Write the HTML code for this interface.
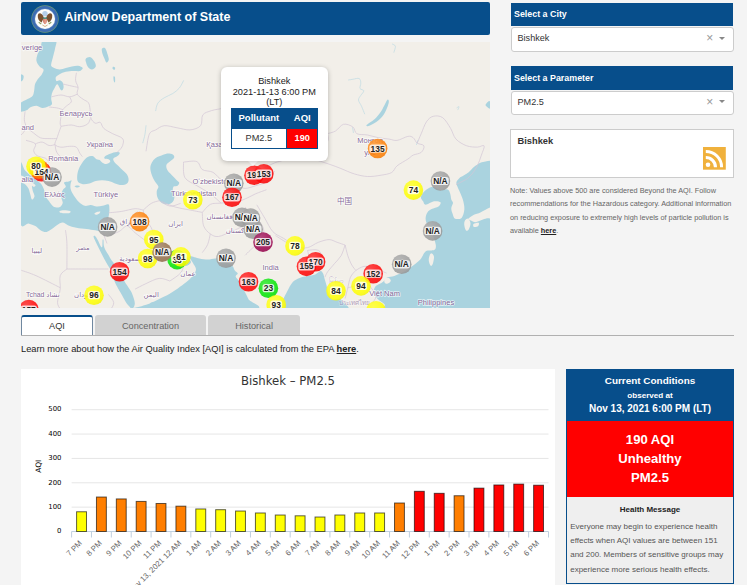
<!DOCTYPE html>
<html lang="en"><head><meta charset="utf-8"><title>AirNow Department of State</title>
<style>
html,body{margin:0;padding:0}
body{width:747px;height:585px;overflow:hidden;background:#f4f4f4;font-family:"Liberation Sans",Arial,sans-serif;color:#333;position:relative}
.abs{position:absolute}
#hdr{left:21px;top:2px;width:469px;height:33px;background:#074e8b;border-radius:2px}
#hdr .t{position:absolute;left:43.4px;top:-1.3px;line-height:33px;font-size:12.5px;font-weight:bold;color:#fff;white-space:nowrap}
#map{left:21px;top:42px;width:469px;height:266px;overflow:hidden;background:#f2efe9}
#map svg{position:absolute;left:0;top:0}
.mt{font:bold 8.4px "Liberation Sans",Arial,sans-serif;text-anchor:middle;fill:#222;stroke:#fff;stroke-opacity:.5;stroke-width:1px;paint-order:stroke;stroke-linejoin:round}
.ml{font:7.5px "Liberation Sans","DejaVu Sans","Noto Sans CJK SC",sans-serif;fill:#7c5c92;fill-opacity:.95;stroke:#fff;stroke-opacity:.7;stroke-width:1.4px;paint-order:stroke}
.ar{font-size:6.9px}
.th{font-size:6.4px;fill-opacity:.6;stroke-opacity:.35}
#pop{left:221px;top:67px;width:106.6px;height:94px;background:#fff;border-radius:6px;box-shadow:0 1px 5px rgba(0,0,0,.25);text-align:center;font-size:9.2px;line-height:10.3px;color:#222}
#pop .tx{position:absolute;left:0;right:0;top:9.3px}
#pop table{position:absolute;left:9.6px;top:41.3px;width:87.8px;height:40px;border-collapse:collapse}
#pop th{background:#074e8b;color:#fff;font-weight:bold;font-size:9.5px;height:19.6px;padding:0;border:0}
#pop td{padding:0;font-size:9.2px;height:19.4px;border:1px solid #074e8b}
#tip{left:246.8px;top:160.3px;width:0;height:0;border-left:6.8px solid transparent;border-right:6.8px solid transparent;border-top:6px solid #fff}
.bh{background:#074e8b;color:#fff;font-weight:bold;font-size:8.9px;line-height:23px;padding-left:3px;box-sizing:border-box;height:23px;width:222px;left:511px}
.sel{left:510.5px;width:223.1px;height:24.6px;box-sizing:border-box;border:1px solid #ccc;border-radius:3px;background:#fff;font-size:9.1px;line-height:22px;padding-left:6px;color:#333}
.sel .x{position:absolute;right:19.3px;top:0.2px;color:#999;font-size:12px}
.sel .v{position:absolute;right:7.2px;top:8.8px;width:0;height:0;border-left:3px solid transparent;border-right:3px solid transparent;border-top:3.5px solid #888}
#info{left:510px;top:129px;width:224px;height:49px;box-sizing:border-box;border:1px solid #ccc;background:#fff}
#info b{position:absolute;left:6.5px;top:6px;font-size:9.3px;color:#333}
#note{left:510px;top:183.7px;width:230px;font-size:7.3px;line-height:13.5px;color:#666;white-space:nowrap}
#note b,#learn b{color:#222;text-decoration:underline}
.tab{top:315px;height:20px;box-sizing:border-box;background:#d2d2d2;border-radius:3px 3px 0 0;font-size:9.2px;line-height:22px;text-align:center;color:#666}
#tabline{left:21px;top:334.7px;width:713px;height:1px;background:#b0b0b0}
#learn{left:21px;top:343.5px;font-size:9.3px;line-height:11px;color:#222;white-space:nowrap}
#chart{left:21px;top:369px;width:534px;height:216px;background:#fff}
#chartsvg{left:0;top:0}
.yl{font:6.9px "DejaVu Sans","Liberation Sans",sans-serif;text-anchor:end;fill:#000}
.xl{font:7.8px "Liberation Sans",Arial,sans-serif;text-anchor:end;fill:#666}
.yt{font:7.5px "DejaVu Sans","Liberation Sans",sans-serif;text-anchor:middle;fill:#000}
.ct{font:11.7px "DejaVu Sans","Liberation Sans",sans-serif;text-anchor:middle;fill:#333}
#cc{left:566px;top:369px;width:168px;height:214.5px;box-sizing:border-box;border:1px solid #074e8b;border-top:0;background:#efefef;text-align:center}
#cc .top{position:absolute;left:-1px;top:0;width:168px;height:52px;background:#074e8b;color:#fff;font-weight:bold}
#cc .top div{position:absolute;left:0;right:0;white-space:nowrap}
#cc .red{position:absolute;left:0;top:51.6px;width:166px;height:76.8px;background:#ff0000;color:#fff;font-weight:bold;font-size:13.1px;line-height:16px}
#cc .red div{position:absolute;left:0;right:0}
#cc .hm{position:absolute;left:0;right:0;top:135.5px;font-size:8px;font-weight:bold;color:#222;line-height:10px}
#cc .msg{position:absolute;left:3.2px;top:150.5px;text-align:left;font-size:8px;line-height:14.4px;color:#555;white-space:nowrap}
</style></head><body>
<div id="hdr" class="abs">
<svg class="abs" style="left:9.6px;top:2.5px" width="28" height="28" viewBox="-14 -14 28 28">
<circle r="13.7" fill="#6f9a7a"/><circle r="13.1" fill="#3c6cb2"/><circle r="10.6" fill="#5d86c4"/><circle r="10" fill="#fdfdfa"/>
<circle cx="0" cy="-5.2" r="2.7" fill="#b4cfea"/>
<path d="M-1.2,-1.5 C-3,-6.5 -6.8,-6.8 -7.2,-3.6 C-7.5,-1 -6.3,2.2 -3.4,3.6 L-2,0.5 Z" fill="#7a5230"/>
<path d="M1.2,-1.5 C3,-6.5 6.8,-6.8 7.2,-3.6 C7.5,-1 6.3,2.2 3.4,3.6 L2,0.5 Z" fill="#7a5230"/>
<path d="M-2,-1.6 h4 v1.5 h-4z" fill="#3a7a6a"/>
<path d="M-2,-.1 h4 v2.2 c0,1.8 -1.2,2.6 -2,3.1 c-.8,-.5 -2,-1.3 -2,-3.1z" fill="#d0604a"/>
<path d="M-1,-.1 v4.3 M0.2,-.1 v5 M1.2,-.1 v4.3" stroke="#f6ebe0" stroke-width=".5"/>
<path d="M-6.3,3.2 l2.6,1.8 M6.3,3.2 l-2.6,1.8" stroke="#8aa060" stroke-width="1.1"/>
<path d="M-2.6,6 l2.6,1.5 l2.6,-1.5" stroke="#d2b48c" stroke-width="1" fill="none"/>
</svg>
<div class="t">AirNow Department of State</div></div>

<div id="map" class="abs">
<svg width="469" height="266" viewBox="21 42 469 266">
<defs><radialGradient id="gl" cx=".35" cy=".3" r=".8"><stop offset="0" stop-color="#fff" stop-opacity=".2"/><stop offset=".65" stop-color="#fff" stop-opacity=".02"/><stop offset="1" stop-color="#000" stop-opacity=".05"/></radialGradient></defs>
<g id="water">
<path d="M43.5,39.5 C40.9,41.0 41.4,46.2 40.4,48.8 C39.4,51.4 37.9,52.8 37.3,54.9 C36.6,57.0 36.1,59.2 36.5,61.1 C36.9,63.0 38.4,65.1 39.6,66.5 C40.8,67.9 43.1,68.2 43.5,69.5 C43.9,70.8 42.8,72.7 41.9,74.2 C41.0,75.8 39.2,77.1 38.1,78.8 C37.0,80.5 35.6,82.3 35.0,84.2 C34.4,86.1 34.6,88.4 34.2,90.3 C33.8,92.2 33.7,94.3 32.7,95.7 C31.7,97.1 29.6,97.9 28.1,98.8 C26.6,99.7 24.9,100.2 23.5,101.1 C22.1,102.0 20.2,102.5 19.6,104.2 C19.0,105.9 18.5,110.5 19.6,111.5 C20.8,112.5 24.7,111.0 26.5,110.3 C28.3,109.6 28.7,108.0 30.4,107.2 C32.1,106.4 34.5,105.6 36.5,105.7 C38.5,105.8 40.8,107.9 42.7,108.0 C44.6,108.1 46.6,107.1 48.1,106.5 C49.6,105.9 51.4,105.5 51.9,104.2 C52.4,102.9 51.2,100.6 51.2,98.8 C51.2,97.0 51.4,95.1 51.9,93.4 C52.4,91.7 53.3,90.3 54.2,88.8 C55.1,87.3 56.1,84.0 57.3,84.2 C58.5,84.5 60.2,89.7 61.2,90.3 C62.2,90.9 63.2,89.3 63.5,88.0 C63.8,86.7 63.4,83.9 62.7,82.6 C62.1,81.3 60.6,80.5 59.6,80.3 C58.6,80.0 57.1,81.6 56.5,81.1 C55.9,80.6 55.3,78.3 55.8,77.2 C56.3,76.1 57.9,75.1 59.6,74.2 C61.3,73.3 63.5,72.3 65.8,71.8 C68.1,71.3 71.2,71.2 73.5,71.1 C75.8,71.0 78.1,71.6 79.6,71.1 C81.1,70.6 83.0,68.9 82.7,68.0 C82.5,67.1 79.9,66.0 78.1,65.7 C76.3,65.5 74.0,66.1 71.9,66.5 C69.9,66.9 67.8,67.5 65.8,68.0 C63.8,68.5 61.5,69.5 59.6,69.5 C57.7,69.5 55.6,68.6 54.2,68.0 C52.8,67.4 51.6,66.9 51.2,65.7 C50.8,64.5 51.5,62.9 51.9,61.1 C52.3,59.3 53.0,57.0 53.5,54.9 C54.0,52.8 54.6,51.4 55.0,48.8 C55.4,46.2 57.7,41.0 55.8,39.5 C53.9,38.0 46.1,38.0 43.5,39.5Z" fill="#aad3df"/>
<path d="M19.6,74.6 C20.2,73.6 23.0,74.8 23.5,75.7 C24.0,76.7 23.3,79.3 22.7,80.3 C22.1,81.2 20.1,82.4 19.6,81.4 C19.1,80.5 19.0,75.5 19.6,74.6Z" fill="#aad3df"/>
<path d="M85.8,58.8 C86.5,57.9 89.0,56.8 90.4,57.2 C91.8,57.6 93.3,59.6 94.2,61.1 C95.1,62.6 96.2,65.1 95.8,66.5 C95.4,67.9 93.2,69.4 91.9,69.5 C90.6,69.6 89.1,68.4 88.1,67.2 C87.1,66.0 86.5,64.0 86.1,62.6 C85.7,61.2 85.1,59.7 85.8,58.8Z" fill="#aad3df"/>
<path d="M101.9,48.8 C102.3,47.9 104.1,47.2 105.0,48.0 C105.9,48.8 106.7,51.5 107.3,53.4 C107.9,55.3 108.9,58.0 108.8,59.5 C108.7,61.0 107.3,62.9 106.5,62.6 C105.7,62.4 104.9,59.5 104.2,58.0 C103.5,56.5 102.8,54.9 102.4,53.4 C102.0,51.9 101.5,49.7 101.9,48.8Z" fill="#aad3df"/>
<path d="M112.8,66.9 C113.2,66.6 114.7,67.0 115.0,67.5 C115.3,68.0 115.1,69.4 114.7,69.7 C114.3,70.0 113.1,69.6 112.8,69.1 C112.5,68.6 112.4,67.2 112.8,66.9Z" fill="#aad3df"/>
<path d="M113.5,76.5 C113.7,75.8 114.8,76.2 115.0,77.2 C115.2,78.2 115.2,81.7 115.0,82.3 C114.8,82.9 114.0,82.1 113.8,81.1 C113.5,80.1 113.3,77.2 113.5,76.5Z" fill="#aad3df"/>
<path d="M77.2,176.1 C77.3,173.9 77.8,171.3 78.8,168.9 C79.8,166.5 81.4,163.7 82.9,161.7 C84.4,159.7 86.1,157.8 87.7,156.9 C89.3,156.0 91.0,155.7 92.5,156.1 C94.0,156.5 95.3,158.6 96.5,159.3 C97.7,160.0 98.8,159.6 99.7,160.1 C100.6,160.6 101.0,161.8 102.1,162.5 C103.2,163.2 104.8,164.2 106.1,164.1 C107.4,164.0 109.8,162.5 110.2,161.7 C110.6,160.9 109.5,159.8 108.6,159.3 C107.6,158.8 105.0,159.0 104.5,158.5 C104.0,158.0 104.3,156.9 105.3,156.1 C106.2,155.3 108.3,154.4 110.2,153.7 C112.1,153.0 115.0,152.1 116.6,152.0 C118.2,151.9 119.7,152.2 119.8,152.9 C119.9,153.6 118.5,155.2 117.4,156.1 C116.3,157.0 113.9,157.6 113.4,158.5 C112.9,159.4 113.4,160.5 114.2,161.7 C115.0,162.9 116.7,164.2 118.2,165.7 C119.7,167.2 121.5,169.0 123.0,170.5 C124.5,172.0 126.1,173.0 127.0,174.5 C127.9,176.0 128.6,177.9 128.6,179.4 C128.6,180.9 128.2,182.5 127.0,183.4 C125.8,184.3 123.4,185.0 121.4,185.0 C119.4,185.0 117.1,184.1 115.0,183.4 C112.9,182.7 110.8,181.5 108.6,181.0 C106.4,180.5 104.2,180.2 102.1,180.2 C99.9,180.2 97.8,180.5 95.7,181.0 C93.6,181.5 91.4,182.9 89.3,183.4 C87.2,183.9 84.8,184.5 82.9,184.2 C81.0,183.9 79.0,183.2 78.0,181.8 C77.0,180.5 77.1,178.2 77.2,176.1Z" fill="#aad3df"/>
<path d="M74.5,186.3 C74.5,186.0 76.3,185.5 77.2,185.5 C78.1,185.5 80.0,186.0 80.0,186.3 C80.0,186.7 78.1,187.6 77.2,187.6 C76.3,187.6 74.5,186.7 74.5,186.3Z" fill="#aad3df"/>
<path d="M160.0,156.1 C161.9,155.3 164.3,154.0 166.4,153.7 C168.5,153.4 171.5,153.8 172.8,154.5 C174.1,155.2 174.6,156.5 174.1,157.7 C173.6,158.9 170.9,160.5 169.6,161.7 C168.3,162.9 166.8,163.6 166.4,164.9 C166.0,166.2 166.4,168.1 167.2,169.7 C168.0,171.3 169.7,172.9 171.2,174.5 C172.7,176.1 174.7,178.1 176.0,179.4 C177.3,180.8 178.9,181.5 179.2,182.6 C179.5,183.7 178.5,185.1 177.6,185.8 C176.7,186.5 174.4,185.7 173.6,186.6 C172.8,187.5 172.7,189.7 172.8,191.4 C172.9,193.1 174.4,195.3 174.4,197.0 C174.4,198.7 173.9,200.6 172.8,201.8 C171.7,203.0 169.9,204.2 168.0,204.3 C166.1,204.5 163.3,203.8 161.6,202.7 C159.9,201.6 158.4,199.7 157.6,197.8 C156.8,195.9 156.6,193.3 156.7,191.4 C156.8,189.5 158.7,188.2 158.4,186.6 C158.1,185.0 156.2,183.7 155.1,181.8 C154.0,179.9 152.7,177.6 151.9,175.3 C151.1,173.0 150.3,170.2 150.3,168.1 C150.3,166.0 151.1,164.1 151.9,162.5 C152.7,160.9 153.8,159.6 155.1,158.5 C156.4,157.4 158.1,156.9 160.0,156.1Z" fill="#aad3df"/>
<path d="M20.0,165.4 C20.9,156.8 23.0,168.5 25.1,170.5 C27.2,172.5 30.2,175.3 32.8,177.4 C35.4,179.5 38.6,181.3 40.5,183.3 C42.4,185.3 43.0,187.2 43.9,189.3 C44.8,191.5 44.7,194.2 45.6,196.2 C46.5,198.2 47.8,199.6 49.1,201.3 C50.4,203.0 51.6,205.4 53.3,206.4 C55.0,207.4 57.7,207.9 59.3,207.3 C60.9,206.7 62.4,204.8 62.7,203.0 C63.0,201.2 61.0,198.3 61.0,196.2 C61.0,194.1 61.9,191.8 62.7,190.2 C63.5,188.6 65.6,188.0 65.8,186.8 C66.0,185.7 64.3,184.1 64.1,183.3 C63.9,182.6 63.8,182.6 64.5,182.3 C65.2,182.0 67.4,181.9 68.6,181.6 C69.8,181.2 71.2,179.8 71.5,180.2 C71.8,180.6 70.8,182.6 70.6,184 C70.4,185.4 70.3,187.3 70.6,188.8 C70.9,190.3 71.6,191.7 72.3,193 C73.0,194.3 73.4,194.9 74.5,196.4 C75.6,197.9 77.2,200.5 78.9,202.1 C80.6,203.7 82.8,205.3 84.8,205.8 C86.8,206.3 88.7,204.9 90.7,205 C92.7,205.1 94.6,206.4 96.6,206.5 C98.6,206.6 100.5,206.2 102.5,205.8 C104.5,205.4 107.2,203.7 108.4,204.3 C109.6,204.9 109.3,207.7 109.4,209.5 C109.5,211.3 109.2,212.9 108.9,215.0 C108.6,217.1 107.9,219.5 107.5,221.8 C107.1,224.1 106.8,226.9 106.3,228.6 C105.8,230.2 106.4,231.4 104.6,231.7 C102.8,232.0 98.2,230.8 95.2,230.3 C92.2,229.9 89.8,229.4 86.7,229.0 C83.6,228.6 79.5,228.4 76.4,227.8 C73.3,227.2 70.2,226.1 67.9,225.2 C65.6,224.3 64.6,222.6 62.7,222.6 C60.9,222.6 58.9,223.9 56.8,225.2 C54.7,226.5 51.8,229.2 49.9,230.3 C48.0,231.5 47.2,232.1 45.6,232.1 C44.0,232.1 42.2,231.3 40.5,230.3 C38.8,229.3 37.4,227.2 35.4,226.1 C33.4,225.0 31.1,224.2 28.5,223.5 C25.9,222.8 21.4,231.5 20.0,221.8 C18.6,212.1 19.1,174.0 20.0,165.4Z" fill="#aad3df"/>
<path d="M93.5,236.6 C93.5,237.5 94.6,239.5 95.4,241.2 C96.2,242.9 97.2,244.9 98.2,246.9 C99.2,248.9 100.2,250.9 101.2,252.9 C102.2,254.9 103.2,256.9 104.3,258.9 C105.4,260.9 106.5,262.8 107.7,264.9 C108.9,267.0 110.3,268.7 111.5,271.5 C112.7,274.3 113.6,278.8 114.6,281.5 C115.6,284.2 116.7,285.8 117.7,287.7 C118.7,289.6 119.8,291.3 120.8,293.1 C121.8,294.9 122.8,296.7 123.8,298.5 C124.8,300.3 125.8,302.3 126.9,303.8 C128.0,305.3 129.4,306.7 130.5,307.4 C131.6,308.1 132.5,308.6 133.2,308.0 C133.9,307.4 134.7,305.4 134.8,303.8 C134.9,302.2 134.4,300.4 133.8,298.5 C133.2,296.6 132.5,294.4 131.5,292.3 C130.5,290.2 128.8,288.0 127.7,286.2 C126.5,284.4 125.8,283.7 124.6,281.5 C123.4,279.3 121.9,275.9 120.3,273.1 C118.7,270.3 116.6,267.0 115.1,264.9 C113.6,262.8 112.6,261.9 111.5,260.3 C110.4,258.7 109.5,256.8 108.5,255.1 C107.5,253.4 106.2,251.6 105.4,250.0 C104.6,248.4 104.1,247.1 103.8,245.4 C103.5,243.7 103.7,240.9 103.5,240.0 C103.3,239.1 102.8,238.8 102.6,240.0 C102.4,241.2 102.6,246.0 102.2,246.9 C101.8,247.8 101.0,246.6 100.3,245.4 C99.5,244.2 98.6,241.6 97.7,240.0 C96.8,238.4 95.8,236.6 95.1,236.0 C94.4,235.4 93.5,235.7 93.5,236.6Z" fill="#aad3df"/>
<path d="M130.5,307.4 C131.2,306.2 131.4,308.2 133.2,308.0 C135.0,307.8 138.8,306.9 141.5,306.2 C144.2,305.5 146.1,304.8 149.2,303.8 C152.3,302.8 156.7,301.4 160.0,300.0 C163.3,298.6 166.6,296.7 169.2,295.4 C171.8,294.1 173.3,293.1 175.4,292.3 C177.5,291.5 180.5,286.6 181.5,290.5 C182.5,294.4 190.2,311.2 181.5,315.4 C172.8,319.5 137.7,316.7 129.2,315.4 C120.7,314.1 129.8,308.6 130.5,307.4Z" fill="#aad3df"/>
<path d="M189.6,256.4 C190.7,255.7 196.3,258.0 199.3,258.5 C202.3,259.0 205.0,259.6 207.8,259.6 C210.7,259.6 213.6,258.1 216.4,258.5 C219.2,258.9 222.2,260.6 224.9,261.8 C227.6,263.1 230.8,264.6 232.4,266.0 C234.0,267.4 233.7,269.1 234.6,270.3 C235.5,271.6 237.6,272.4 237.8,273.5 C238.0,274.6 235.3,275.3 235.7,276.7 C236.0,278.1 238.5,279.8 239.9,282.1 C241.3,284.4 242.8,287.9 244.2,290.7 C245.6,293.5 247.1,296.0 248.5,299.2 C249.9,302.4 269.2,308.1 252.8,309.9 C236.4,311.7 167.1,311.0 150.0,309.9 C132.9,308.8 149.3,304.9 150.0,303.5 C150.7,302.1 152.5,302.3 154.3,301.4 C156.1,300.5 158.2,299.4 160.7,298.2 C163.2,296.9 166.5,295.5 169.3,293.9 C172.2,292.3 175.0,290.5 177.8,288.5 C180.7,286.5 183.9,284.2 186.4,282.1 C188.9,280.0 191.2,277.8 192.8,275.7 C194.4,273.6 196.0,271.4 196.0,269.3 C196.0,267.2 193.9,265.0 192.8,262.8 C191.7,260.6 188.5,257.1 189.6,256.4Z" fill="#aad3df"/>
<path d="M157,241 C157.8,240.2 160.8,241.5 163,243 C165.2,244.5 167.5,248.0 170,250 C172.5,252.0 175.3,253.8 178,255 C180.7,256.2 183.8,255.8 186,257 C188.2,258.2 191.0,260.5 191,262 C191.0,263.5 187.8,265.7 186,266 C184.2,266.3 182.3,264.7 180,264 C177.7,263.3 174.5,263.3 172,262 C169.5,260.7 167.3,258.3 165,256 C162.7,253.7 159.3,250.5 158,248 C156.7,245.5 156.2,241.8 157,241Z" fill="#aad3df"/>
<path d="M279.6,310.1 C269.4,308.4 281.8,302.8 283.1,299.6 C284.4,296.4 285.8,293.8 287.4,290.9 C289.0,288.0 290.6,284.4 292.6,282.2 C294.6,280.0 297.1,278.9 299.6,277.9 C302.1,276.9 304.8,276.7 307.4,276.1 C310.0,275.5 313.0,275.3 315.2,274.4 C317.4,273.5 319.2,271.0 320.5,270.9 C321.8,270.8 322.4,272.1 323.1,273.5 C323.8,274.9 324.2,277.6 324.8,279.6 C325.4,281.6 326.0,283.5 326.6,285.7 C327.2,287.9 327.6,290.7 328.3,292.7 C329.0,294.7 330.0,296.8 330.9,297.9 C331.8,299.0 332.1,299.5 333.5,299.6 C334.9,299.7 338.2,298.4 339.6,298.7 C341.1,299.0 341.4,299.5 342.2,301.4 C343.0,303.3 354.9,308.7 344.5,310.1 C334.1,311.6 289.8,311.9 279.6,310.1Z" fill="#aad3df"/>
<path d="M420.9,197.5 C420.9,196.1 422.0,194.1 423.1,192.7 C424.2,191.3 425.8,190.0 427.4,189.0 C429.0,188.0 430.9,186.9 432.5,186.8 C434.1,186.7 435.4,187.9 436.8,188.5 C438.2,189.1 439.6,190.1 441.0,190.2 C442.4,190.3 444.0,189.3 445.3,189.3 C446.6,189.3 447.9,189.3 448.7,190.2 C449.5,191.1 450.0,192.9 450.4,194.5 C450.8,196.1 450.9,198.2 451.3,199.6 C451.7,201.0 453.0,201.6 453.0,203.0 C453.0,204.4 451.4,206.2 451.3,208.1 C451.2,209.9 452.1,212.3 452.7,214.1 C453.3,215.9 453.6,218.1 455.1,218.7 C456.6,219.3 460.1,219.4 461.6,217.9 C463.1,216.4 464.0,212.6 464.3,209.8 C464.6,207.0 463.9,203.9 463.3,201.3 C462.7,198.7 461.6,196.4 460.7,194.1 C459.8,191.8 458.5,189.5 457.8,187.6 C457.1,185.7 456.1,184.1 456.4,182.5 C456.6,180.9 458.1,179.3 459.3,178.2 C460.5,177.0 462.0,176.6 463.6,175.6 C465.2,174.6 467.0,173.6 468.7,172.2 C470.4,170.8 471.9,168.7 473.9,167.1 C475.8,165.5 478.5,163.7 480.4,162.8 C482.3,161.9 483.9,161.9 485.5,161.6 C487.1,161.3 488.4,161.0 490.1,160.8 C491.8,160.6 494.8,160.1 495.8,160.3 C496.8,160.5 496.0,136.1 496,162 C496.0,187.9 513.9,290.3 496,316 C478.1,341.7 407.4,317.9 388.8,316 C370.2,314.1 386.5,307.4 384.7,304.6 C382.9,301.8 379.7,301.2 377.9,299.2 C376.1,297.1 374.2,294.4 373.8,292.3 C373.4,290.2 374.3,288.2 375.2,286.8 C376.1,285.4 377.9,285.0 379.3,284.1 C380.7,283.2 382.0,282.5 383.4,281.4 C384.8,280.3 385.7,278.2 387.5,277.3 C389.3,276.4 391.6,276.8 394.3,275.9 C397.0,275.0 400.9,273.4 403.9,271.8 C406.9,270.2 409.4,268.4 412.1,266.3 C414.8,264.2 418.0,262.0 420.3,259.5 C422.6,257.0 423.5,252.9 425.8,251.3 C428.1,249.7 432.5,250.9 434.2,250.0 C435.9,249.1 435.9,247.7 435.9,245.8 C435.9,244.0 434.9,241.2 434.2,238.9 C433.5,236.6 432.7,234.4 431.6,232.1 C430.5,229.8 428.4,227.5 427.4,225.2 C426.4,222.9 425.6,220.5 425.6,218.4 C425.6,216.3 426.4,214.0 427.4,212.4 C428.4,210.8 429.8,210.0 431.6,209.0 C433.5,208.0 437.0,207.5 438.5,206.4 C440.0,205.3 441.2,203.2 440.5,202.3 C439.8,201.5 436.7,200.9 434.2,201.3 C431.7,201.7 427.5,204.7 425.6,204.7 C423.8,204.7 423.9,202.5 423.1,201.3 C422.3,200.1 420.9,198.9 420.9,197.5Z" fill="#aad3df"/>
<path d="M387.7,99.6 C388.3,99.5 389.3,100.5 388.7,103.0 C388.1,105.5 385.9,111.4 383.8,114.6 C381.7,117.8 378.9,120.1 376.3,122.0 C373.7,123.9 370.0,125.6 368.4,126.1 C366.8,126.6 365.7,126.0 366.8,124.8 C367.9,123.6 372.4,121.2 374.8,118.9 C377.2,116.6 379.4,113.8 381.2,111.2 C382.9,108.6 384.2,105.4 385.3,103.5 C386.4,101.6 387.1,99.7 387.7,99.6Z" fill="#aad3df"/>
<path d="M485.6,104.8 C485.9,103.8 488.7,100.5 489.7,101.2 C490.7,101.9 491.8,107.9 491.5,108.9 C491.2,109.9 488.7,108.1 487.7,107.4 C486.7,106.7 485.3,105.8 485.6,104.8Z" fill="#aad3df"/>
<path d="M20.0,175.6 C20.9,174.9 23.4,176.4 25.1,177.4 C26.8,178.4 28.6,180.3 30.3,181.6 C32.0,182.9 34.8,184.1 35.4,185.0 C36.0,185.9 34.3,186.7 33.7,186.8 C33.1,187.0 32.1,185.2 32.0,185.9 C31.8,186.6 32.4,189.3 32.8,191.0 C33.2,192.7 34.6,194.8 34.5,196.2 C34.4,197.6 32.7,199.9 32.0,199.6 C31.3,199.3 30.9,196.2 30.3,194.4 C29.7,192.6 29.4,190.2 28.5,188.5 C27.6,186.8 26.5,185.3 25.1,184.2 C23.7,183.0 20.9,183.0 20.0,181.6 C19.1,180.2 19.1,176.3 20.0,175.6Z" fill="#f2efe9"/>
<path d="M59.8,211 C60.5,210.6 62.3,210.3 64,210.3 C65.7,210.3 69.2,210.6 70.1,211 C71.0,211.4 70.7,212.6 69.5,213 C68.3,213.4 64.6,213.3 63,213.2 C61.4,213.1 60.5,213.0 60,212.6 C59.5,212.2 59.1,211.4 59.8,211Z" fill="#f2efe9"/>
<path d="M94.4,213.6 C94.6,213.1 96.0,212.3 97,212 C98.0,211.7 100.0,211.3 100.3,211.6 C100.6,211.9 99.7,213.3 99,213.8 C98.3,214.3 96.8,214.8 96,214.8 C95.2,214.8 94.2,214.1 94.4,213.6Z" fill="#f2efe9"/>
<path d="M468.4,218.7 C468.8,217.8 471.5,216.1 473.5,215.0 C475.5,213.9 478.4,213.3 480.4,212.4 C482.4,211.5 483.8,210.7 485.5,209.8 C487.2,209.0 488.9,207.9 490.6,207.3 C492.3,206.7 494.9,204.4 495.8,206.4 C496.7,208.4 496.8,217.3 495.8,219.3 C494.8,221.3 491.5,218.5 489.8,218.4 C488.1,218.3 487.1,218.3 485.5,218.7 C483.9,219.0 482.1,219.9 480.4,220.5 C478.7,221.1 476.8,222.2 475.2,222.2 C473.6,222.2 472.1,221.1 471.0,220.5 C469.9,219.9 468.0,219.6 468.4,218.7Z" fill="#f2efe9"/>
<path d="M465.0,220.5 C465.7,219.4 467.5,218.2 468.4,218.7 C469.3,219.2 470.4,221.7 470.5,223.5 C470.6,225.3 469.4,228.3 468.7,229.5 C467.9,230.7 466.7,231.1 466.0,230.4 C465.3,229.7 464.5,226.8 464.3,225.2 C464.1,223.5 464.3,221.6 465.0,220.5Z" fill="#f2efe9"/>
<path d="M473.5,223.9 C474.3,223.2 477.9,222.4 478.7,222.8 C479.4,223.2 478.8,225.6 478.0,226.3 C477.2,227.0 474.6,227.3 473.9,226.9 C473.1,226.5 472.7,224.6 473.5,223.9Z" fill="#f2efe9"/>
<path d="M431.8,253.4 C432.5,253.6 433.8,255.0 434.0,256.7 C434.2,258.4 433.4,262.1 432.9,263.6 C432.3,265.1 431.4,266.3 430.7,265.8 C430.0,265.3 429.0,262.5 428.8,260.8 C428.6,259.1 429.1,256.6 429.6,255.4 C430.1,254.2 431.1,253.2 431.8,253.4Z" fill="#f2efe9"/>
<path d="M384.7,278.6 C385.4,277.8 387.8,277.7 388.8,278.1 C389.8,278.5 390.9,279.9 390.8,280.8 C390.7,281.7 389.0,283.3 388.0,283.6 C387.0,283.9 385.2,283.5 384.7,282.7 C384.1,281.9 384.0,279.4 384.7,278.6Z" fill="#f2efe9"/>
</g>
<g id="rivers" fill="none" stroke="#bcd9e3" stroke-width=".9" stroke-opacity=".75" stroke-linecap="round">
<path d="M348.5,80.0 C349.3,79.9 351.3,79.5 353.1,79.2 C354.9,79.0 357.9,77.8 359.2,78.5 C360.5,79.2 360.7,81.4 360.8,83.1 C360.9,84.8 359.5,87.2 360.0,88.5 C360.5,89.8 363.7,89.6 363.8,90.8 C363.9,92.0 361.7,93.9 360.8,95.4 C359.9,96.9 358.4,98.2 358.5,100.0 C358.6,101.8 360.5,103.9 361.5,106.2 C362.5,108.5 364.1,112.5 364.6,113.8"/>
<path d="M352.6,127.7 L353.4,132.6"/>
<path d="M183.5,80.7 C182.8,82.0 181.0,86.1 179.2,88.2 C177.4,90.3 175.3,91.9 172.8,93.5 C170.3,95.1 166.7,96.2 164.2,97.8 C161.7,99.4 159.2,101.0 157.8,103.2 C156.4,105.4 156.0,109.5 155.7,110.7"/>
<path d="M146.0,125.7 C145.8,127.1 145.5,131.3 145.0,134.2 C144.5,137.0 143.2,141.4 142.8,142.8"/>
<path d="M392.3,44.1 C392.8,44.5 395.1,44.8 395.4,46.2 C395.7,47.6 394.1,51.3 393.9,52.3"/>
<path d="M456.9,107.7 C457.2,107.5 458.8,106.4 459.0,106.7 C459.2,107.0 458.1,109.2 457.9,109.7"/>
<path d="M417.9,140.5 L416.5,144.6"/>
</g>
<g id="borders" fill="none" stroke="#d3c5d6" stroke-width=".7">
<path d="M76.4,72.8 C76.3,74.1 75.3,78.1 75.6,80.5 C75.9,82.9 77.8,85.1 78.1,87.4 C78.4,89.7 76.4,92.2 77.3,94.2 C78.2,96.2 81.3,97.9 83.2,99.3 C85.1,100.7 87.2,101.0 88.4,102.7 C89.6,104.4 89.7,107.0 90.1,109.6 C90.5,112.2 90.1,115.8 90.9,118.1 C91.8,120.4 93.6,122.5 95.2,123.2 C96.8,123.9 98.9,121.5 100.3,122.4 C101.7,123.3 101.8,126.6 103.8,128.4 C105.8,130.2 109.2,131.8 112.3,133.5 C115.4,135.2 120.9,136.6 122.6,138.6 C124.3,140.6 123.2,143.5 122.6,145.5 C122.0,147.5 120.2,149.3 119.1,150.6 C117.9,151.9 116.3,152.8 115.7,153.2"/>
<path d="M62.7,83.9 C63.9,84.2 67.0,85.0 69.6,85.6 C72.2,86.2 76.7,87.1 78.1,87.4"/>
<path d="M51.6,96.8 C53.2,96.5 58.0,95.0 61.0,95.0 C64.0,95.0 66.9,96.9 69.6,96.8 C72.3,96.7 76.0,94.6 77.3,94.2"/>
<path d="M69.6,96.8 C69.9,97.7 71.9,100.3 71.3,101.9 C70.7,103.5 67.6,104.9 66.2,106.2 C64.8,107.5 63.3,109.0 62.7,109.6"/>
<path d="M49.1,107.0 C50.4,107.2 54.5,107.5 56.8,107.9 C59.1,108.3 61.7,109.3 62.7,109.6"/>
<path d="M62.7,109.6 C62.4,110.7 61.4,114.1 61.0,116.4 C60.6,118.7 60.2,121.5 60.2,123.2 C60.2,124.9 60.9,126.1 61.0,126.7"/>
<path d="M61.0,126.3 C62.7,126.1 68.2,124.9 71.3,125.0 C74.4,125.1 77.1,126.9 79.8,126.7 C82.5,126.5 85.7,125.4 87.5,124.1 C89.3,122.8 89.9,119.5 90.4,118.6"/>
<path d="M61.0,126.7 C60.6,127.8 59.2,131.5 58.5,133.5 C57.8,135.5 57.1,137.8 56.8,138.6"/>
<path d="M26.0,127.5 C27.0,128.2 29.6,130.1 32.0,131.8 C34.4,133.5 37.6,136.7 40.5,137.8 C43.4,138.9 46.4,138.5 49.1,138.6 C51.8,138.7 55.5,138.6 56.8,138.6"/>
<path d="M56.8,138.6 C56.5,139.6 54.3,143.2 55.0,144.6 C55.7,146.0 58.6,146.9 61.0,147.2 C63.4,147.5 67.0,146.3 69.6,146.3 C72.2,146.3 74.7,146.0 76.4,147.2 C78.1,148.3 78.8,151.6 79.8,153.2 C80.8,154.8 82.0,156.0 82.4,156.6"/>
<path d="M25.1,111.3 C25.0,112.7 24.2,117.1 24.3,119.8 C24.4,122.5 26.3,125.2 26.0,127.5 C25.7,129.8 23.6,132.2 22.6,133.5 C21.6,134.8 20.4,134.9 20.0,135.2"/>
<path d="M35.4,143.8 C36.5,143.5 39.9,141.8 42.2,142.1 C44.5,142.4 47.0,145.1 49.1,145.5 C51.2,145.9 54.0,144.8 55.0,144.6"/>
<path d="M26.0,140.3 C27.6,140.9 34.1,142.1 35.4,143.8 C36.7,145.5 33.4,148.6 33.7,150.6 C34.0,152.6 35.1,154.4 37.1,155.7 C39.1,157.0 43.6,157.2 45.6,158.3 C47.6,159.5 48.5,161.9 49.1,162.6"/>
<path d="M55.0,144.6 C55.3,145.9 55.5,150.0 56.8,152.3 C58.1,154.6 60.3,156.9 62.7,158.3 C65.1,159.7 68.7,160.9 71.3,160.9 C73.9,160.9 77.0,158.7 78.1,158.3"/>
<path d="M146.0,151.3 C146.6,148.5 147.7,137.8 149.3,134.2 C150.9,130.6 153.2,131.3 155.7,129.9 C158.2,128.5 160.6,126.1 164.2,125.7 C167.8,125.3 172.8,127.1 177.1,127.8 C181.4,128.5 186.0,130.2 189.9,129.9 C193.8,129.6 198.4,128.2 200.6,125.7 C202.8,123.2 201.0,117.4 202.8,114.9 C204.6,112.4 208.1,111.8 211.3,110.7 C214.5,109.6 220.3,108.9 222.1,108.5"/>
<path d="M183.5,162.1 C185.7,162.0 193.8,160.3 196.9,161.6 C200.0,162.8 199.6,167.8 202.3,169.6 C205.0,171.4 209.7,170.5 213.0,172.3 C216.3,174.1 219.3,179.2 222.4,180.3 C225.5,181.4 230.1,179.2 231.7,179.0"/>
<path d="M183.5,162.1 C183.7,164.7 182.7,173.7 184.9,177.6 C187.1,181.5 192.7,183.0 196.9,185.7 C201.1,188.4 206.3,190.8 210.3,193.7 C214.3,196.6 219.2,201.5 221.0,203.1"/>
<path d="M247.8,171.8 C249.6,171.5 254.0,171.6 258.5,170.1 C263.0,168.6 270.6,164.6 274.6,162.9 C278.6,161.2 280.4,161.8 282.6,160.2 C284.8,158.6 284.9,155.1 288.0,153.5 C291.1,151.9 299.2,151.3 301.4,150.9"/>
<path d="M274.6,171.0 C273.2,172.8 269.6,179.2 266.5,181.7 C263.4,184.1 259.4,184.6 255.8,185.7 C252.2,186.8 248.2,188.4 245.1,188.4 C242.0,188.4 238.4,186.1 237.1,185.7"/>
<path d="M202.3,212.4 C203.6,211.1 207.2,206.0 210.3,204.4 C213.4,202.8 216.5,203.6 221.0,203.1 C225.5,202.6 232.6,202.6 237.1,201.7 C241.6,200.8 244.7,199.0 247.8,197.7 C250.9,196.4 252.7,195.0 255.8,193.7 C258.9,192.4 264.7,190.4 266.5,189.7"/>
<path d="M202.3,212.4 C202.5,214.6 202.3,222.2 203.6,225.8 C204.9,229.4 207.8,232.1 210.3,233.9 C212.8,235.7 214.8,236.9 218.4,236.5 C222.0,236.1 227.7,233.0 231.7,231.2 C235.7,229.4 239.7,228.5 242.4,225.8 C245.1,223.1 247.4,218.2 247.8,215.1 C248.2,212.0 245.6,208.4 245.1,207.1"/>
<path d="M162.1,201.7 C164.3,202.6 171.0,205.8 175.5,207.1 C180.0,208.4 184.4,208.9 188.9,209.8 C193.4,210.7 200.1,212.0 202.3,212.4"/>
<path d="M247.8,215.1 C249.6,216.0 255.8,217.8 258.5,220.5 C261.2,223.2 263.9,227.6 263.9,231.2 C263.9,234.8 260.7,238.8 258.5,241.9 C256.3,245.0 252.7,247.7 250.5,249.9 C248.3,252.1 246.0,254.4 245.1,255.3"/>
<path d="M210.3,233.9 C209.9,235.7 208.9,241.5 207.6,244.6 C206.3,247.7 203.2,251.3 202.3,252.6"/>
<path d="M327.5,133.7 C328.8,133.2 332.8,132.6 335.5,131.0 C338.2,129.4 340.6,125.0 343.5,124.3 C346.4,123.6 350.7,125.4 352.9,127.0 C355.1,128.6 354.4,132.4 356.9,133.7 C359.3,135.0 364.0,134.3 367.6,135.0 C371.2,135.7 374.8,137.0 378.4,137.7 C382.0,138.4 386.0,138.6 389.1,139.1 C392.2,139.6 394.0,140.8 397.1,140.4 C400.2,140.0 405.1,136.9 407.8,136.4 C410.5,135.9 411.6,136.6 413.2,137.7 C414.8,138.8 415.4,141.8 417.2,143.1 C419.0,144.4 423.2,144.2 423.9,145.8 C424.6,147.4 423.0,150.9 421.2,152.4 C419.4,153.9 415.4,154.0 413.2,155.1 C411.0,156.2 410.5,157.3 407.8,159.1 C405.1,160.9 399.8,163.6 397.1,165.8 C394.4,168.0 394.4,170.9 391.7,172.5 C389.0,174.1 385.0,174.5 381.0,175.2 C377.0,175.9 372.1,176.7 367.6,176.5 C363.2,176.3 358.8,175.2 354.3,173.9 C349.9,172.6 344.9,170.1 340.9,168.5 C336.9,166.9 333.3,165.6 330.2,164.5 C327.1,163.4 324.3,162.7 322.1,161.8 C319.9,160.9 317.7,161.1 316.8,159.1 C315.9,157.1 315.0,152.7 316.8,149.8 C318.6,146.9 325.7,144.4 327.5,141.7 C329.3,139.0 327.5,135.0 327.5,133.7"/>
<path d="M417.2,143.1 C417.9,141.5 419.6,137.3 421.2,133.7 C422.8,130.1 424.5,124.6 426.5,121.7 C428.5,118.8 430.5,117.0 433.2,116.3 C435.9,115.6 439.7,115.6 442.6,117.6 C445.5,119.6 448.4,124.8 450.6,128.4 C452.8,132.0 453.3,136.2 456.0,139.1 C458.7,142.0 463.1,144.5 466.7,145.8 C470.3,147.1 474.5,147.1 477.4,147.1 C480.3,147.1 483.4,144.5 484.1,145.8 C484.8,147.1 482.5,151.8 481.4,155.1 C480.3,158.4 478.9,162.7 477.4,165.8 C475.8,168.9 473.9,171.7 472.1,173.9 C470.3,176.1 467.6,178.3 466.7,179.2"/>
<path d="M456.0,184.6 L466.7,179.2"/>
<path d="M290.0,128.4 C291.8,129.3 297.1,132.4 300.7,133.7 C304.3,135.0 308.3,134.6 311.4,136.4 C314.5,138.2 318.6,142.2 319.5,144.4 C320.4,146.6 317.2,148.9 316.8,149.8"/>
<path d="M256.8,204.8 C258.1,207.0 262.1,213.7 264.8,218.2 C267.5,222.7 269.7,228.2 272.8,231.6 C275.9,234.9 279.5,235.9 283.5,238.3 C287.5,240.8 292.9,244.8 296.9,246.3 C300.9,247.9 304.0,248.3 307.6,247.6 C311.2,246.9 314.8,243.6 318.4,242.3 C322.0,241.0 326.0,239.6 329.1,239.6 C332.2,239.6 334.4,241.4 337.1,242.3 C339.8,243.2 343.8,244.6 345.1,245.0"/>
<path d="M275.5,235.6 C277.7,236.9 284.0,241.4 288.9,243.6 C293.8,245.8 302.3,248.1 305.0,249.0"/>
<path d="M307.6,250.3 C309.4,250.3 315.9,249.0 318.4,250.3 C320.9,251.7 322.0,255.7 322.4,258.4 C322.8,261.1 322.6,265.5 321.0,266.4 C319.4,267.3 315.0,265.5 313.0,263.7 C311.0,261.9 309.9,257.9 309.0,255.7 C308.1,253.5 307.8,251.2 307.6,250.3"/>
<path d="M345.1,245.0 C344.4,246.8 342.9,252.6 341.1,255.7 C339.3,258.8 336.6,261.0 334.4,263.7 C332.2,266.4 329.3,269.5 327.7,271.7 C326.1,273.9 325.4,276.2 325.0,277.1"/>
<path d="M345.1,245.0 C345.6,246.8 346.7,252.4 347.8,255.7 C348.9,259.0 350.5,262.6 351.8,265.0 C353.1,267.4 355.1,269.5 355.8,270.4"/>
<path d="M355.8,270.4 C354.9,271.5 351.8,274.2 350.5,277.1 C349.2,280.0 348.7,284.2 347.8,287.8 C346.9,291.4 345.6,296.7 345.1,298.5"/>
<path d="M355.8,270.4 C357.1,269.7 361.2,266.8 363.9,266.4 C366.6,265.9 369.2,267.0 371.9,267.7 C374.6,268.4 377.4,269.5 379.9,270.4 C382.3,271.3 385.5,272.7 386.6,273.1"/>
<path d="M363.9,277.1 C364.8,278.4 367.2,282.0 369.2,285.1 C371.2,288.2 375.4,292.7 375.9,295.8 C376.3,298.9 372.6,302.5 371.9,303.9"/>
<path d="M347.8,287.8 C349.1,287.4 353.1,286.9 355.8,285.1 C358.5,283.3 362.5,278.4 363.9,277.1"/>
<path d="M65.5,230.2 C65.7,232.4 66.7,237.0 66.9,243.5 C67.1,250.0 66.9,264.8 66.9,269.0"/>
<path d="M66.9,269.0 C70.2,269.0 80.0,269.0 86.9,269.0 C93.8,269.0 104.8,269.0 108.4,269.0"/>
<path d="M21.3,270.3 C23.8,271.2 29.6,272.8 36.1,275.7 C42.6,278.6 56.2,285.7 60.2,287.7"/>
<path d="M66.9,269.0 C65.8,270.1 61.3,272.3 60.2,275.7 C59.1,279.1 60.7,284.7 60.2,289.1 C59.8,293.6 57.5,299.1 57.5,302.4 C57.5,305.7 59.8,308.0 60.2,309.1"/>
<path d="M103.0,232.8 L107.0,243.5"/>
<path d="M108.4,235.5 C110.2,234.8 116.0,233.1 119.1,231.5 C122.2,229.9 124.4,225.9 127.1,226.1 C129.8,226.3 132.0,230.3 135.1,232.8 C138.2,235.3 144.0,239.6 145.8,240.9"/>
<path d="M108.4,212.8 C110.6,212.6 117.2,212.1 121.7,211.4 C126.2,210.7 131.5,208.9 135.1,208.7 C138.7,208.5 141.8,209.9 143.2,210.1"/>
<path d="M143.2,210.1 C143.6,211.7 144.5,216.6 145.8,219.5 C147.1,222.4 149.8,224.8 151.2,227.5 C152.5,230.2 153.4,234.2 153.9,235.5"/>
<path d="M127.1,226.1 C128.0,224.6 130.6,219.2 132.4,216.8 C134.2,214.4 136.9,212.3 137.8,211.4"/>
<path d="M135.1,289.1 C136.9,288.2 141.8,285.5 145.8,283.7 C149.8,281.9 155.2,278.8 159.2,278.4 C163.2,277.9 168.1,280.6 169.9,281.0"/>
<path d="M169.9,281.0 C171.7,279.7 178.4,275.7 180.6,273.0 C182.8,270.3 183.7,267.2 183.3,265.0 C182.9,262.8 178.9,260.5 178.0,259.6"/>
<path d="M108.4,294.4 C109.3,295.7 113.3,299.9 113.7,302.4 C114.1,304.8 111.5,308.0 111.0,309.1"/>
<path d="M143.2,210.1 C144.5,209.0 148.5,205.0 151.2,203.4 C153.9,201.8 157.9,201.1 159.2,200.7"/>
<path d="M159.2,200.7 C161.0,201.6 166.3,205.6 169.9,206.1 C173.5,206.6 178.8,203.8 180.6,203.4"/>
</g>
<g id="labels">
<text class="ml" x="21.8" y="49.6" text-anchor="start">verige</text>
<text class="ml" x="76" y="115.6" text-anchor="middle">Беларусь</text>
<text class="ml" x="21.5" y="130.4" text-anchor="start">and</text>
<text class="ml" x="99.8" y="147.2" text-anchor="middle">Україна</text>
<text class="ml" x="63.2" y="160.9" text-anchor="middle">România</text>
<text class="ml" x="21.4" y="182.3" text-anchor="start">alia</text>
<text class="ml" x="54.4" y="197.3" text-anchor="middle">Ελλάς</text>
<text class="ml" x="105.8" y="196.5" text-anchor="middle">Türkiye</text>
<text class="ml" x="193.6" y="195.8" text-anchor="middle">Türkmenistan</text>
<text class="ml" x="212" y="183.5" text-anchor="middle">Oʻzbekiston</text>
<text class="ml" x="206.3" y="146.9" text-anchor="start">Қазақстан</text>
<text class="ml ar" x="175.5" y="225.8" text-anchor="middle">ایران</text>
<text class="ml ar" x="220.4" y="219.1" text-anchor="middle">افغانستان</text>
<text class="ml ar" x="237" y="233" text-anchor="middle">پاکستان</text>
<text class="ml" x="270.6" y="269.6" text-anchor="middle">India</text>
<text class="ml" x="344.4" y="203.5" text-anchor="middle">中国</text>
<text class="ml" x="370" y="143" text-anchor="middle">Монгол</text>
<text class="ml" x="370" y="154.6" text-anchor="middle">улс</text>
<text class="ml" x="384.6" y="295.8" text-anchor="middle">Việt Nam</text>
<text class="ml th" x="354.5" y="305.2" text-anchor="middle">ประเทศไทย</text>
<text class="ml" x="436" y="305.4" text-anchor="middle">Philippines</text>
<text class="ml ar" x="36.8" y="252.9" text-anchor="middle">ليبيا</text>
<text class="ml ar" x="82.9" y="250.2" text-anchor="middle">مصر</text>
<text class="ml ar" x="129" y="223.5" text-anchor="middle">العراق</text>
<text class="ml ar" x="132" y="261" text-anchor="middle">السعودية</text>
<text class="ml ar" x="151.2" y="297.1" text-anchor="middle">اليمن</text>
<text class="ml ar" x="188" y="276.2" text-anchor="middle">عمان</text>
<text class="ml ar" x="42.8" y="297.1" text-anchor="middle">Tchad تشاد</text>
<text class="ml ar" x="86" y="297.1" text-anchor="middle">السودان</text>
<text class="ml th" x="336" y="283" text-anchor="middle">မြန်မာ</text>
</g>
<g id="markers">
<g transform="translate(28.8,309.5)"><circle r="9.8" fill="#ff0000" fill-opacity=".86"/><circle r="9.8" fill="url(#gl)"/></g>
<g transform="translate(41.5,171.7)"><circle r="9.8" fill="#ff0000" fill-opacity=".86"/><circle r="9.8" fill="url(#gl)"/></g>
<g transform="translate(39,169.2)"><circle r="9.8" fill="#ff7e00" fill-opacity=".86"/><circle r="9.8" fill="url(#gl)"/></g>
<g transform="translate(36,166.3)"><circle r="9.8" fill="#ffff00" fill-opacity=".86"/><circle r="9.8" fill="url(#gl)"/></g>
<g transform="translate(52,177.1)"><circle r="9.8" fill="#9b9b9b" fill-opacity=".86"/><circle r="9.8" fill="url(#gl)"/></g>
<g transform="translate(139.6,221.6)"><circle r="9.8" fill="#ff7e00" fill-opacity=".86"/><circle r="9.8" fill="url(#gl)"/></g>
<g transform="translate(107.6,226.9)"><circle r="9.8" fill="#9b9b9b" fill-opacity=".86"/><circle r="9.8" fill="url(#gl)"/></g>
<g transform="translate(153.8,239.5)"><circle r="9.8" fill="#ffff00" fill-opacity=".86"/><circle r="9.8" fill="url(#gl)"/></g>
<g transform="translate(147.7,258.5)"><circle r="9.8" fill="#ffff00" fill-opacity=".86"/><circle r="9.8" fill="url(#gl)"/></g>
<g transform="translate(177.1,259.6)"><circle r="9.8" fill="#00e400" fill-opacity=".86"/><circle r="9.8" fill="url(#gl)"/></g>
<g transform="translate(180.9,256.9)"><circle r="9.8" fill="#ffff00" fill-opacity=".86"/><circle r="9.8" fill="url(#gl)"/></g>
<g transform="translate(162.1,252.1)"><circle r="9.8" fill="#a08060" fill-opacity="1"/><circle r="9.8" fill="url(#gl)"/></g>
<g transform="translate(119.6,271.7)"><circle r="9.8" fill="#ff0000" fill-opacity=".86"/><circle r="9.8" fill="url(#gl)"/></g>
<g transform="translate(94,295.2)"><circle r="9.8" fill="#ffff00" fill-opacity=".86"/><circle r="9.8" fill="url(#gl)"/></g>
<g transform="translate(192.8,199.7)"><circle r="9.8" fill="#ffff00" fill-opacity=".86"/><circle r="9.8" fill="url(#gl)"/></g>
<g transform="translate(233.8,183.3)"><circle r="9.8" fill="#9b9b9b" fill-opacity=".86"/><circle r="9.8" fill="url(#gl)"/></g>
<g transform="translate(232,197.3)"><circle r="9.8" fill="#ff0000" fill-opacity=".86"/><circle r="9.8" fill="url(#gl)"/></g>
<g transform="translate(254,175.3)"><circle r="9.8" fill="#ff0000" fill-opacity=".86"/><circle r="9.8" fill="url(#gl)"/></g>
<g transform="translate(263.8,173.7)"><circle r="9.8" fill="#ff0000" fill-opacity=".86"/><circle r="9.8" fill="url(#gl)"/></g>
<g transform="translate(242,217.4)"><circle r="9.8" fill="#9b9b9b" fill-opacity=".86"/><circle r="9.8" fill="url(#gl)"/></g>
<g transform="translate(250.6,218.1)"><circle r="9.8" fill="#9b9b9b" fill-opacity=".86"/><circle r="9.8" fill="url(#gl)"/></g>
<g transform="translate(253.2,229.2)"><circle r="9.8" fill="#9b9b9b" fill-opacity=".86"/><circle r="9.8" fill="url(#gl)"/></g>
<g transform="translate(263,242.1)"><circle r="9.8" fill="#99004c" fill-opacity=".86"/><circle r="9.8" fill="url(#gl)"/></g>
<g transform="translate(295,245.9)"><circle r="9.8" fill="#ffff00" fill-opacity=".86"/><circle r="9.8" fill="url(#gl)"/></g>
<g transform="translate(226,258.2)"><circle r="9.8" fill="#9b9b9b" fill-opacity=".86"/><circle r="9.8" fill="url(#gl)"/></g>
<g transform="translate(248.5,281.7)"><circle r="9.8" fill="#ff0000" fill-opacity=".86"/><circle r="9.8" fill="url(#gl)"/></g>
<g transform="translate(268.4,288.2)"><circle r="9.8" fill="#00e400" fill-opacity=".86"/><circle r="9.8" fill="url(#gl)"/></g>
<g transform="translate(276.2,304.7)"><circle r="9.8" fill="#ffff00" fill-opacity=".86"/><circle r="9.8" fill="url(#gl)"/></g>
<g transform="translate(315.6,261.7)"><circle r="9.8" fill="#ff0000" fill-opacity=".86"/><circle r="9.8" fill="url(#gl)"/></g>
<g transform="translate(306.5,266.4)"><circle r="9.8" fill="#ff0000" fill-opacity=".86"/><circle r="9.8" fill="url(#gl)"/></g>
<g transform="translate(336,290.7)"><circle r="9.8" fill="#ffff00" fill-opacity=".86"/><circle r="9.8" fill="url(#gl)"/></g>
<g transform="translate(373.2,273.7)"><circle r="9.8" fill="#ff0000" fill-opacity=".86"/><circle r="9.8" fill="url(#gl)"/></g>
<g transform="translate(361,285.9)"><circle r="9.8" fill="#ffff00" fill-opacity=".86"/><circle r="9.8" fill="url(#gl)"/></g>
<g transform="translate(376,310.7)"><circle r="9.8" fill="#ffff00" fill-opacity=".86"/><circle r="9.8" fill="url(#gl)"/></g>
<g transform="translate(377.6,148.5)"><circle r="9.8" fill="#ff7e00" fill-opacity=".86"/><circle r="9.8" fill="url(#gl)"/></g>
<g transform="translate(413.4,190.1)"><circle r="9.8" fill="#ffff00" fill-opacity=".86"/><circle r="9.8" fill="url(#gl)"/></g>
<g transform="translate(440.4,181.0)"><circle r="9.8" fill="#9b9b9b" fill-opacity=".86"/><circle r="9.8" fill="url(#gl)"/></g>
<g transform="translate(432.6,230.9)"><circle r="9.8" fill="#9b9b9b" fill-opacity=".86"/><circle r="9.8" fill="url(#gl)"/></g>
<g transform="translate(401.7,264.3)"><circle r="9.8" fill="#9b9b9b" fill-opacity=".86"/><circle r="9.8" fill="url(#gl)"/></g>
<rect x="20.6" y="305.4" width="16.4" height="8.2" rx="2.6" fill="#fff" fill-opacity=".78"/><text class="mt" x="28.8" y="312.5">157</text>
<rect x="33.3" y="167.6" width="16.4" height="8.2" rx="2.6" fill="#fff" fill-opacity=".78"/><text class="mt" x="41.5" y="174.7">154</text>
<rect x="30.1" y="162.2" width="11.8" height="8.2" rx="2.6" fill="#fff" fill-opacity=".78"/><text class="mt" x="36" y="169.3">80</text>
<rect x="43.7" y="173.0" width="16.6" height="8.2" rx="2.6" fill="#fff" fill-opacity=".78"/><text class="mt" x="52" y="180.1">N/A</text>
<rect x="131.4" y="217.5" width="16.4" height="8.2" rx="2.6" fill="#fff" fill-opacity=".78"/><text class="mt" x="139.6" y="224.6">108</text>
<rect x="99.3" y="222.8" width="16.6" height="8.2" rx="2.6" fill="#fff" fill-opacity=".78"/><text class="mt" x="107.6" y="229.9">N/A</text>
<rect x="147.9" y="235.4" width="11.8" height="8.2" rx="2.6" fill="#fff" fill-opacity=".78"/><text class="mt" x="153.8" y="242.5">95</text>
<rect x="141.8" y="254.4" width="11.8" height="8.2" rx="2.6" fill="#fff" fill-opacity=".78"/><text class="mt" x="147.7" y="261.5">98</text>
<rect x="171.2" y="255.5" width="11.8" height="8.2" rx="2.6" fill="#fff" fill-opacity=".78"/><text class="mt" x="177.1" y="262.6">33</text>
<rect x="175.0" y="252.8" width="11.8" height="8.2" rx="2.6" fill="#fff" fill-opacity=".78"/><text class="mt" x="180.9" y="259.9">61</text>
<rect x="153.8" y="248.0" width="16.6" height="8.2" rx="2.6" fill="#fff" fill-opacity=".78"/><text class="mt" x="162.1" y="255.1">N/A</text>
<rect x="111.4" y="267.6" width="16.4" height="8.2" rx="2.6" fill="#fff" fill-opacity=".78"/><text class="mt" x="119.6" y="274.7">154</text>
<rect x="88.1" y="291.1" width="11.8" height="8.2" rx="2.6" fill="#fff" fill-opacity=".78"/><text class="mt" x="94" y="298.2">96</text>
<rect x="186.9" y="195.6" width="11.8" height="8.2" rx="2.6" fill="#fff" fill-opacity=".78"/><text class="mt" x="192.8" y="202.7">73</text>
<rect x="225.5" y="179.2" width="16.6" height="8.2" rx="2.6" fill="#fff" fill-opacity=".78"/><text class="mt" x="233.8" y="186.3">N/A</text>
<rect x="223.8" y="193.2" width="16.4" height="8.2" rx="2.6" fill="#fff" fill-opacity=".78"/><text class="mt" x="232" y="200.3">167</text>
<rect x="245.8" y="171.2" width="16.4" height="8.2" rx="2.6" fill="#fff" fill-opacity=".78"/><text class="mt" x="254" y="178.3">190</text>
<rect x="255.6" y="169.6" width="16.4" height="8.2" rx="2.6" fill="#fff" fill-opacity=".78"/><text class="mt" x="263.8" y="176.7">153</text>
<rect x="233.7" y="213.3" width="16.6" height="8.2" rx="2.6" fill="#fff" fill-opacity=".78"/><text class="mt" x="242" y="220.4">N/A</text>
<rect x="242.3" y="214.0" width="16.6" height="8.2" rx="2.6" fill="#fff" fill-opacity=".78"/><text class="mt" x="250.6" y="221.1">N/A</text>
<rect x="244.9" y="225.1" width="16.6" height="8.2" rx="2.6" fill="#fff" fill-opacity=".78"/><text class="mt" x="253.2" y="232.2">N/A</text>
<rect x="254.8" y="238.0" width="16.4" height="8.2" rx="2.6" fill="#fff" fill-opacity=".78"/><text class="mt" x="263" y="245.1">205</text>
<rect x="289.1" y="241.8" width="11.8" height="8.2" rx="2.6" fill="#fff" fill-opacity=".78"/><text class="mt" x="295" y="248.9">78</text>
<rect x="217.7" y="254.1" width="16.6" height="8.2" rx="2.6" fill="#fff" fill-opacity=".78"/><text class="mt" x="226" y="261.2">N/A</text>
<rect x="240.3" y="277.6" width="16.4" height="8.2" rx="2.6" fill="#fff" fill-opacity=".78"/><text class="mt" x="248.5" y="284.7">163</text>
<rect x="262.5" y="284.1" width="11.8" height="8.2" rx="2.6" fill="#fff" fill-opacity=".78"/><text class="mt" x="268.4" y="291.2">23</text>
<rect x="270.3" y="300.6" width="11.8" height="8.2" rx="2.6" fill="#fff" fill-opacity=".78"/><text class="mt" x="276.2" y="307.7">93</text>
<rect x="307.4" y="257.6" width="16.4" height="8.2" rx="2.6" fill="#fff" fill-opacity=".78"/><text class="mt" x="315.6" y="264.7">170</text>
<rect x="298.3" y="262.3" width="16.4" height="8.2" rx="2.6" fill="#fff" fill-opacity=".78"/><text class="mt" x="306.5" y="269.4">155</text>
<rect x="330.1" y="286.6" width="11.8" height="8.2" rx="2.6" fill="#fff" fill-opacity=".78"/><text class="mt" x="336" y="293.7">84</text>
<rect x="365.0" y="269.6" width="16.4" height="8.2" rx="2.6" fill="#fff" fill-opacity=".78"/><text class="mt" x="373.2" y="276.7">152</text>
<rect x="355.1" y="281.8" width="11.8" height="8.2" rx="2.6" fill="#fff" fill-opacity=".78"/><text class="mt" x="361" y="288.9">94</text>
<rect x="369.4" y="144.4" width="16.4" height="8.2" rx="2.6" fill="#fff" fill-opacity=".78"/><text class="mt" x="377.6" y="151.5">135</text>
<rect x="407.5" y="186.0" width="11.8" height="8.2" rx="2.6" fill="#fff" fill-opacity=".78"/><text class="mt" x="413.4" y="193.1">74</text>
<rect x="432.1" y="176.9" width="16.6" height="8.2" rx="2.6" fill="#fff" fill-opacity=".78"/><text class="mt" x="440.4" y="184.0">N/A</text>
<rect x="424.3" y="226.8" width="16.6" height="8.2" rx="2.6" fill="#fff" fill-opacity=".78"/><text class="mt" x="432.6" y="233.9">N/A</text>
<rect x="393.4" y="260.2" width="16.6" height="8.2" rx="2.6" fill="#fff" fill-opacity=".78"/><text class="mt" x="401.7" y="267.3">N/A</text>
</g>
</svg>
</div>
<div id="tip" class="abs"></div>
<div id="pop" class="abs"><div class="tx">Bishkek<br>2021-11-13 6:00 PM<br>(LT)</div>
<table><tr><th style="width:55.5px">Pollutant</th><th>AQI</th></tr><tr><td style="background:#fff;color:#333">PM2.5</td><td style="background:#ff0000;color:#fff;font-weight:bold">190</td></tr></table></div>

<div class="abs bh" style="top:3px">Select a City</div>
<div class="abs sel" style="top:27px;line-height:21px">Bishkek<span class="x">×</span><span class="v"></span></div>
<div class="abs bh" style="top:66px;height:24px;line-height:24px">Select a Parameter</div>
<div class="abs sel" style="top:90.7px;height:24px;line-height:20.5px">PM2.5<span class="x">×</span><span class="v"></span></div>
<div id="info" class="abs"><b>Bishkek</b>
<svg class="abs" style="left:192.2px;top:17.2px" width="22.8" height="22.7" viewBox="0 0 22.8 22.7"><rect width="22.8" height="22.7" fill="#f0b13c"/>
<circle cx="5" cy="17.7" r="2.3" fill="#fff"/>
<path d="M2.8,9 a11.2,11.2 0 0 1 11.2,11.2 h-3.1 a8.1,8.1 0 0 0 -8.1,-8.1z" fill="#fff"/>
<path d="M2.8,2.9 a17.3,17.3 0 0 1 17.3,17.3 h-3 a14.3,14.3 0 0 0 -14.3,-14.3z" fill="#fff"/>
</svg></div>
<div id="note" class="abs">Note: Values above 500 are considered Beyond the AQI. Follow<br>recommendations for the Hazardous category. Additional information<br>on reducing exposure to extremely high levels of particle pollution is<br>available <b>here</b>.</div>

<div class="abs tab" style="left:21px;width:72px;background:#fff;border:1px solid #7088a0;border-top:2px solid #074e8b;border-bottom:0;color:#333;line-height:19.6px;height:20px;font-size:9.2px">AQI</div>
<div class="abs tab" style="left:95px;width:111px">Concentration</div>
<div class="abs tab" style="left:208.3px;width:91.5px">Historical</div>
<div id="tabline" class="abs"></div>
<div id="learn" class="abs">Learn more about how the Air Quality Index [AQI] is calculated from the EPA <b>here</b>.</div>

<div id="chart" class="abs"><svg id="chartsvg" class="abs" width="534.5" height="216" viewBox="21 369 534.5 216">
<text class="yl" x="61.5" y="533.2">0</text>
<rect x="71.6" y="506.64" width="476.9" height="1" fill="#e6e6e6"/>
<text class="yl" x="61.5" y="508.8">100</text>
<rect x="71.6" y="482.28" width="476.9" height="1" fill="#e6e6e6"/>
<text class="yl" x="61.5" y="484.5">200</text>
<rect x="71.6" y="457.92" width="476.9" height="1" fill="#e6e6e6"/>
<text class="yl" x="61.5" y="460.1">300</text>
<rect x="71.6" y="433.56" width="476.9" height="1" fill="#e6e6e6"/>
<text class="yl" x="61.5" y="435.8">400</text>
<rect x="71.6" y="409.20" width="476.9" height="1" fill="#e6e6e6"/>
<text class="yl" x="61.5" y="411.4">500</text>
<rect x="71.6" y="531.0" width="476.9" height="1" fill="#c0d0e0"/>
<rect x="71.10" y="531.5" width="1" height="6" fill="#c0d0e0"/>
<rect x="90.97" y="531.5" width="1" height="6" fill="#c0d0e0"/>
<rect x="110.84" y="531.5" width="1" height="6" fill="#c0d0e0"/>
<rect x="130.71" y="531.5" width="1" height="6" fill="#c0d0e0"/>
<rect x="150.58" y="531.5" width="1" height="6" fill="#c0d0e0"/>
<rect x="170.45" y="531.5" width="1" height="6" fill="#c0d0e0"/>
<rect x="190.32" y="531.5" width="1" height="6" fill="#c0d0e0"/>
<rect x="210.20" y="531.5" width="1" height="6" fill="#c0d0e0"/>
<rect x="230.07" y="531.5" width="1" height="6" fill="#c0d0e0"/>
<rect x="249.94" y="531.5" width="1" height="6" fill="#c0d0e0"/>
<rect x="269.81" y="531.5" width="1" height="6" fill="#c0d0e0"/>
<rect x="289.68" y="531.5" width="1" height="6" fill="#c0d0e0"/>
<rect x="309.55" y="531.5" width="1" height="6" fill="#c0d0e0"/>
<rect x="329.42" y="531.5" width="1" height="6" fill="#c0d0e0"/>
<rect x="349.29" y="531.5" width="1" height="6" fill="#c0d0e0"/>
<rect x="369.16" y="531.5" width="1" height="6" fill="#c0d0e0"/>
<rect x="389.03" y="531.5" width="1" height="6" fill="#c0d0e0"/>
<rect x="408.90" y="531.5" width="1" height="6" fill="#c0d0e0"/>
<rect x="428.77" y="531.5" width="1" height="6" fill="#c0d0e0"/>
<rect x="448.65" y="531.5" width="1" height="6" fill="#c0d0e0"/>
<rect x="468.52" y="531.5" width="1" height="6" fill="#c0d0e0"/>
<rect x="488.39" y="531.5" width="1" height="6" fill="#c0d0e0"/>
<rect x="508.26" y="531.5" width="1" height="6" fill="#c0d0e0"/>
<rect x="528.13" y="531.5" width="1" height="6" fill="#c0d0e0"/>
<rect x="548.00" y="531.5" width="1" height="6" fill="#c0d0e0"/>
<rect x="76.59" y="511.77" width="9.9" height="19.73" fill="#ffff00" stroke="#000" stroke-opacity=".62" stroke-width="1"/>
<text class="xl" transform="translate(82.4,543.7) rotate(-45)">7 PM</text>
<rect x="96.46" y="497.03" width="9.9" height="34.47" fill="#ff7e00" stroke="#000" stroke-opacity=".62" stroke-width="1"/>
<text class="xl" transform="translate(102.3,543.7) rotate(-45)">8 PM</text>
<rect x="116.33" y="498.93" width="9.9" height="32.57" fill="#ff7e00" stroke="#000" stroke-opacity=".62" stroke-width="1"/>
<text class="xl" transform="translate(122.2,543.7) rotate(-45)">9 PM</text>
<rect x="136.20" y="501.42" width="9.9" height="30.08" fill="#ff7e00" stroke="#000" stroke-opacity=".62" stroke-width="1"/>
<text class="xl" transform="translate(142.0,543.7) rotate(-45)">10 PM</text>
<rect x="156.07" y="503.49" width="9.9" height="28.01" fill="#ff7e00" stroke="#000" stroke-opacity=".62" stroke-width="1"/>
<text class="xl" transform="translate(161.9,543.7) rotate(-45)">11 PM</text>
<rect x="175.94" y="506.17" width="9.9" height="25.33" fill="#ff7e00" stroke="#000" stroke-opacity=".62" stroke-width="1"/>
<text class="xl" transform="translate(181.8,543.7) rotate(-45)">Nov 13, 2021 12 AM</text>
<rect x="195.81" y="508.97" width="9.9" height="22.53" fill="#ffff00" stroke="#000" stroke-opacity=".62" stroke-width="1"/>
<text class="xl" transform="translate(201.7,543.7) rotate(-45)">1 AM</text>
<rect x="215.68" y="509.70" width="9.9" height="21.80" fill="#ffff00" stroke="#000" stroke-opacity=".62" stroke-width="1"/>
<text class="xl" transform="translate(221.5,543.7) rotate(-45)">2 AM</text>
<rect x="235.55" y="511.04" width="9.9" height="20.46" fill="#ffff00" stroke="#000" stroke-opacity=".62" stroke-width="1"/>
<text class="xl" transform="translate(241.4,543.7) rotate(-45)">3 AM</text>
<rect x="255.42" y="512.99" width="9.9" height="18.51" fill="#ffff00" stroke="#000" stroke-opacity=".62" stroke-width="1"/>
<text class="xl" transform="translate(261.3,543.7) rotate(-45)">4 AM</text>
<rect x="275.29" y="515.03" width="9.9" height="16.47" fill="#ffff00" stroke="#000" stroke-opacity=".62" stroke-width="1"/>
<text class="xl" transform="translate(281.1,543.7) rotate(-45)">5 AM</text>
<rect x="295.16" y="515.81" width="9.9" height="15.69" fill="#ffff00" stroke="#000" stroke-opacity=".62" stroke-width="1"/>
<text class="xl" transform="translate(301.0,543.7) rotate(-45)">6 AM</text>
<rect x="315.04" y="517.03" width="9.9" height="14.47" fill="#ffff00" stroke="#000" stroke-opacity=".62" stroke-width="1"/>
<text class="xl" transform="translate(320.9,543.7) rotate(-45)">7 AM</text>
<rect x="334.91" y="515.01" width="9.9" height="16.49" fill="#ffff00" stroke="#000" stroke-opacity=".62" stroke-width="1"/>
<text class="xl" transform="translate(340.8,543.7) rotate(-45)">8 AM</text>
<rect x="354.78" y="512.99" width="9.9" height="18.51" fill="#ffff00" stroke="#000" stroke-opacity=".62" stroke-width="1"/>
<text class="xl" transform="translate(360.6,543.7) rotate(-45)">9 AM</text>
<rect x="374.65" y="512.99" width="9.9" height="18.51" fill="#ffff00" stroke="#000" stroke-opacity=".62" stroke-width="1"/>
<text class="xl" transform="translate(380.5,543.7) rotate(-45)">10 AM</text>
<rect x="394.52" y="503.00" width="9.9" height="28.50" fill="#ff7e00" stroke="#000" stroke-opacity=".62" stroke-width="1"/>
<text class="xl" transform="translate(400.4,543.7) rotate(-45)">11 AM</text>
<rect x="414.39" y="491.31" width="9.9" height="40.19" fill="#ff0000" stroke="#000" stroke-opacity=".62" stroke-width="1"/>
<text class="xl" transform="translate(420.2,543.7) rotate(-45)">12 PM</text>
<rect x="434.26" y="493.33" width="9.9" height="38.17" fill="#ff0000" stroke="#000" stroke-opacity=".62" stroke-width="1"/>
<text class="xl" transform="translate(440.1,543.7) rotate(-45)">1 PM</text>
<rect x="454.13" y="495.74" width="9.9" height="35.76" fill="#ff7e00" stroke="#000" stroke-opacity=".62" stroke-width="1"/>
<text class="xl" transform="translate(460.0,543.7) rotate(-45)">2 PM</text>
<rect x="474.00" y="488.14" width="9.9" height="43.36" fill="#ff0000" stroke="#000" stroke-opacity=".62" stroke-width="1"/>
<text class="xl" transform="translate(479.9,543.7) rotate(-45)">3 PM</text>
<rect x="493.87" y="484.97" width="9.9" height="46.53" fill="#ff0000" stroke="#000" stroke-opacity=".62" stroke-width="1"/>
<text class="xl" transform="translate(499.7,543.7) rotate(-45)">4 PM</text>
<rect x="513.74" y="484.10" width="9.9" height="47.40" fill="#ff0000" stroke="#000" stroke-opacity=".62" stroke-width="1"/>
<text class="xl" transform="translate(519.6,543.7) rotate(-45)">5 PM</text>
<rect x="533.61" y="485.22" width="9.9" height="46.28" fill="#ff0000" stroke="#000" stroke-opacity=".62" stroke-width="1"/>
<text class="xl" transform="translate(539.5,543.7) rotate(-45)">6 PM</text>
<text class="yt" transform="translate(40.6,466.3) rotate(-90)">AQI</text>
<text class="ct" x="288" y="385">Bishkek – PM2.5</text>
</svg></div>

<div id="cc" class="abs">
<div class="top"><div style="top:6.2px;font-size:9.95px;line-height:12px">Current Conditions</div><div style="top:21.5px;font-size:8.1px;line-height:10px">observed at</div><div style="top:34px;font-size:10px;line-height:12px">Nov 13, 2021 6:00 PM (LT)</div></div>
<div class="red"><div style="top:11.3px">190 AQI</div><div style="top:30.5px">Unhealthy</div><div style="top:49.2px">PM2.5</div></div>
<div class="hm">Health Message</div>
<div class="msg">Everyone may begin to experience health<br>effects when AQI values are between 151<br>and 200. Members of sensitive groups may<br>experience more serious health effects.</div>
</div>
</body></html>
